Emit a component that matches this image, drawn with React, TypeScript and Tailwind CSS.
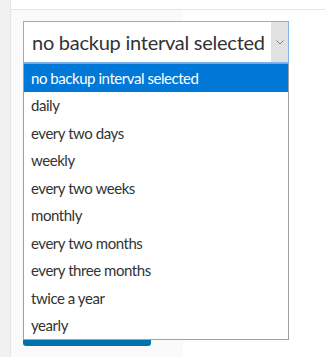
import React from 'react';

const options = [
  'no backup interval selected',
  'daily',
  'every two days',
  'weekly',
  'every two weeks',
  'monthly',
  'every two months',
  'every three months',
  'twice a year',
  'yearly',
];

const App: React.FC = () => {
  return (
    <div className="flex w-[325px] h-[357px] overflow-hidden bg-white font-['Lato',sans-serif]">
      <div className="w-[11px] shrink-0 bg-[#f1f1f1] border-r border-[#e6e6e6]" />
      <div className="flex-1 flex flex-col">
        <div className="h-[10px] shrink-0 border-b border-[#e5e5e5]" />
        <div className="relative w-[172px] flex-1 bg-[#fafafa] pl-[12px] pt-[11px]">
          <div className="relative w-[266px]">
            <div className="flex h-[42px] border border-[#7eb4ea] bg-white">
              <div className="flex-1 flex items-center pl-[8px] text-[20px] tracking-[-0.25px] text-[#333] whitespace-nowrap overflow-hidden">
                no backup interval selected
              </div>
              <div className="w-[17px] bg-[#e1e1e1] flex items-center justify-center">
                <svg width="8" height="5" viewBox="0 0 8 5" fill="none">
                  <path d="M0.5 0.5l3.5 3.5L7.5 0.5" stroke="#808080" strokeWidth="1" />
                </svg>
              </div>
            </div>
            <div className="absolute left-0 top-[42px] w-[266px] border border-[#a0a0a0] bg-white z-10">
              {options.map((o, i) => (
                <div
                  key={o}
                  className={
                    i === 0
                      ? 'h-[27.5px] flex items-center pl-[7px] text-[15px] tracking-[-0.45px] bg-[#0078d7] text-white whitespace-nowrap'
                      : 'h-[27.5px] flex items-center pl-[7px] text-[15px] tracking-[-0.45px] text-[#333] whitespace-nowrap'
                  }
                >
                  {o}
                </div>
              ))}
            </div>
          </div>
          <div className="mt-[242px] w-[128px] h-[41px] rounded-[3px] bg-[#0073aa]" />
        </div>
      </div>
    </div>
  );
};

export default App;
